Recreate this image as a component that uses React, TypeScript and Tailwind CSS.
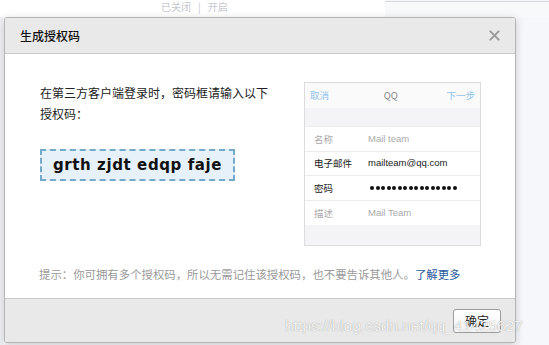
import React from "react";

const cjk = { fontFamily: '"Noto Sans CJK SC", "Noto Sans", sans-serif' };

const PhoneRow = ({ label, value, strong, last }: { label: string; value: React.ReactNode; strong?: boolean; last?: boolean }) => (
  <div className={`flex items-center h-[24.5px] bg-white ${last ? "" : "border-b border-[#ececec]"}`}>
    <span className={`w-[63px] pl-[9px] text-[9.5px] ${strong ? "text-[#222]" : "text-[#aaa]"}`}>{label}</span>
    <span
      className={`text-[9.5px] ${strong ? "text-[#222]" : "text-[#aaa]"}`}
      style={{ fontFamily: '"Liberation Sans", Arial, sans-serif' }}
    >
      {value}
    </span>
  </div>
);

export default function App() {
  return (
    <div className="relative w-[549px] h-[345px] overflow-hidden bg-[#f5f7fa]" style={cjk}>
      {/* page behind the dialog */}
      <div className="flex h-[17px]">
        <div className="w-[385px] bg-white flex items-start pl-[161px] pt-[1px] text-[10px] leading-[12px] text-[#c5c8d0]">
          已关闭 <span className="mx-[7px]">|</span> 开启
        </div>
        <div className="flex-1 border-t border-[#d4d7dc] mt-[1px] bg-[#f8f9fb]" />
      </div>
      <div className="absolute left-0 top-[17px] w-[3px] h-[328px] bg-[#eef1f5]" />

      {/* dialog */}
      <div className="absolute left-[4px] top-[17px] w-[512px] h-[326px] flex flex-col bg-white border border-[#b4b4b4] rounded-[3px] shadow-[0_2px_8px_rgba(0,0,0,0.18)] overflow-hidden">
        <div className="h-[36px] flex items-center justify-between pl-[15px] pr-[15px] bg-[#e9e9e9] border-b border-[#c8c8c8]">
          <span className="text-[12px] font-medium text-[#111]">生成授权码</span>
          <svg width="11" height="11" viewBox="0 0 12 12">
            <path d="M1.5 1.5 L10.5 10.5 M10.5 1.5 L1.5 10.5" stroke="#9a9a9a" strokeWidth="2.2" strokeLinecap="round" />
          </svg>
        </div>

        <div className="flex-1 flex flex-col pl-[34px] pr-[34px]">
          <div className="flex justify-between pt-[28px]">
            <div className="flex flex-col pl-[1px]">
              <p className="text-[12px] leading-[21px] text-[#222]">
                在第三方客户端登录时，密码框请输入以下
                <br />
                授权码：
              </p>
              <div className="mt-[25px] w-[195px] h-[32px] flex items-center justify-center bg-[#e6f1f9] border-2 border-dashed border-[#74aac9]">
                <span className="text-[15px] font-bold text-[#111] tracking-[0.6px]" style={{ fontFamily: '"DejaVu Sans", Verdana, sans-serif' }}>
                  grth zjdt edqp faje
                </span>
              </div>
            </div>

            <div className="w-[177px] h-[164px] flex flex-col border border-[#dcdcdc] bg-[#f4f4f6]">
              <div className="h-[25px] flex items-center justify-between px-[5px] bg-[#fafafa] text-[9.5px]">
                <span className="text-[#8fc3ea]">取消</span>
                <span className="text-[#888] pl-[6px]">QQ</span>
                <span className="text-[#8fc3ea]">下一步</span>
              </div>
              <div className="h-[19px] border-b border-[#ececec]" />
              <PhoneRow label="名称" value="Mail team" />
              <PhoneRow label="电子邮件" value="mailteam@qq.com" strong />
              <PhoneRow
                label="密码"
                strong
                value={
                  <span className="flex gap-[1.5px] items-center pl-[2px]">
                    {Array.from({ length: 16 }).map((_, i) => (
                      <span key={i} className="block w-[4px] h-[4px] rounded-full bg-[#111]" />
                    ))}
                  </span>
                }
              />
              <PhoneRow label="描述" value="Mail Team" last />
            </div>
          </div>

          <p className="mt-[20px] text-[11.4px] leading-[16px] text-[#9a9a9a] whitespace-nowrap">
            提示：你可拥有多个授权码，所以无需记住该授权码，也不要告诉其他人。<span className="text-[#2a5b9c]">了解更多</span>
          </p>
        </div>

        <div className="h-[44px] flex items-center justify-end pr-[14px] bg-[#e9e9e9] border-t border-[#c8c8c8]">
          <button className="w-[48px] h-[24px] flex items-center justify-center bg-gradient-to-b from-white to-[#f3f3f3] border border-[#9c9c9c] rounded-[3px] text-[12px] text-[#222]">
            确定
          </button>
        </div>
      </div>

      {/* watermark */}
      <div
        className="absolute left-[285px] top-[316px] text-[15.5px] leading-[20px] text-white/85 whitespace-nowrap pointer-events-none"
        style={{ fontFamily: '"Liberation Sans", Arial, sans-serif', textShadow: "0 0 1px rgba(110,110,110,0.7)" }}
      >
        https://blog.csdn.net/qq_41425627
      </div>
    </div>
  );
}
